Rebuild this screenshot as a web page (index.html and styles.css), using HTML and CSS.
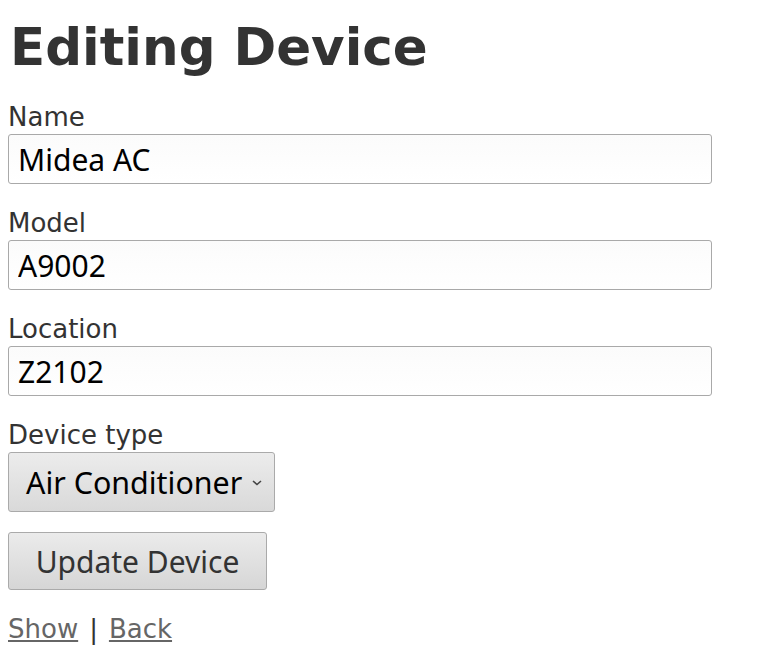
FILE: index.html
```html
<!DOCTYPE html>
<html>
<head>
<meta charset="utf-8">
<title>Editing Device</title>
<link rel="stylesheet" href="styles.css">
</head>
<body>
<h1 class="title">Editing Device</h1>
<form class="form">
  <div class="field">
    <label class="label" for="name">Name</label>
    <input class="input" id="name" type="text" value="Midea AC">
  </div>
  <div class="field">
    <label class="label" for="model">Model</label>
    <input class="input" id="model" type="text" value="A9002">
  </div>
  <div class="field">
    <label class="label" for="location">Location</label>
    <input class="input" id="location" type="text" value="Z2102">
  </div>
  <div class="field">
    <label class="label" for="type">Device type</label>
    <div class="select">
      <span class="select-text">Air Conditioner</span>
      <svg class="chev" width="10" height="6" viewBox="0 0 10 6"><path d="M1 1 L5 4.5 L9 1" fill="none" stroke="#444" stroke-width="1.6"/></svg>
    </div>
  </div>
  <div class="actions">
    <button class="button" type="button">Update Device</button>
  </div>
</form>
<div class="links"><a href="#" class="link">Show</a><span class="sep">|</span><a href="#" class="link">Back</a></div>
</body>
</html>
```
FILE: styles.css
```css
body {
  margin: 8px;
  background: #fff;
  color: #333;
  font-family: "DejaVu Sans", sans-serif;
  font-size: 26px;
}
.title {
  font-family: "DejaVu Sans", sans-serif;
  font-weight: bold;
  font-size: 51.5px;
  line-height: 60px;
  margin: 9px 0 23px 2px;
  color: #333;
}
.form {
  display: flex;
  flex-direction: column;
}
.field {
  display: flex;
  flex-direction: column;
  margin-bottom: 22px;
}
.label {
  display: block;
  line-height: 34px;
  color: #333;
}
.input {
  box-sizing: border-box;
  width: 704px;
  height: 50px;
  margin: 0;
  padding: 0 9px;
  border: 1px solid #a9a9a9;
  border-radius: 3px;
  background: linear-gradient(#fbfbfb, #ffffff);
  font-family: "Noto Sans", sans-serif;
  font-size: 30px;
  color: #000;
  outline: none;
}
.select {
  box-sizing: border-box;
  display: inline-flex;
  align-items: center;
  align-self: flex-start;
  width: 267px;
  height: 60px;
  padding: 0 12px 0 17px;
  border: 1px solid #aaa;
  border-radius: 3px;
  background: linear-gradient(#ececec, #d9d9d9);
  font-family: "Noto Sans", sans-serif;
  font-size: 30.4px;
  color: #000;
}
.select-text { flex: 1; }
.chev { margin-top: 2px; }
.actions { display: flex; margin-top: -2px; }
.button {
  box-sizing: border-box;
  width: 259px;
  height: 58px;
  margin: 0;
  border: 1px solid #aaa;
  border-radius: 3px;
  background: linear-gradient(#ebebeb, #d6d6d6);
  font-family: "Noto Sans", sans-serif;
  font-size: 30px;
  color: #333;
  padding: 0;
}
.links {
  margin-top: 21px;
  line-height: 36px;
}
.sep { margin: 0 11px; }
.link { color: #666; }
```
